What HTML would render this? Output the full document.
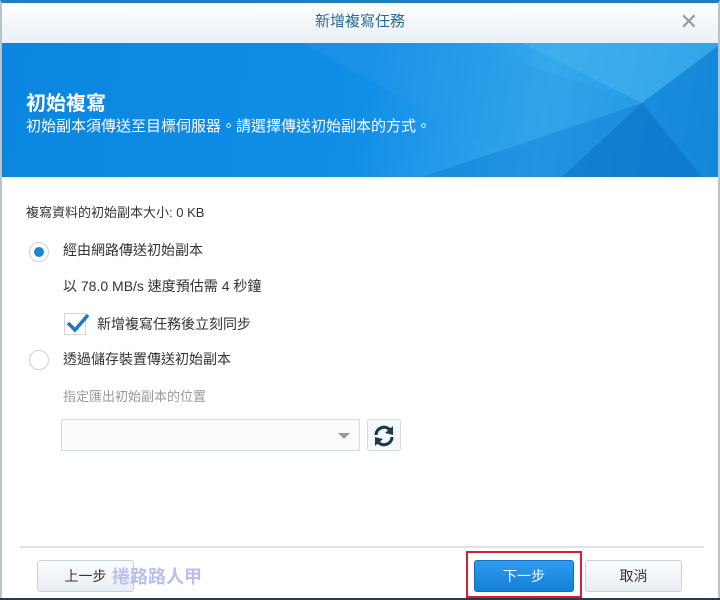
<!DOCTYPE html>
<html><head><meta charset="utf-8"><style>
*{margin:0;padding:0;box-sizing:border-box}
body{width:720px;height:600px;overflow:hidden;background:#2a3a48;font-family:"Liberation Sans","Noto Sans CJK TC",sans-serif;position:relative}
.win{position:absolute;left:0;top:0;width:720px;height:598px;background:#fff;border-top:3px solid #1b7fc0;border-left:2px solid #b8c4cc;border-right:2px solid #b8c4cc}
.title{position:absolute;left:0;right:0;top:0;height:40px;background:linear-gradient(#fdfeff,#eaf0f5);text-align:center;line-height:38px;color:#2a6a9a;font-size:15px}
.x{position:absolute;right:20px;top:0;color:#999;font-size:22px;line-height:38px}
.banner{position:absolute;left:0;right:0;top:40px;height:134px;background:linear-gradient(100deg,#0a86e0 0%,#118ee6 50%,#36a8ec 75%,#1890e0 100%);overflow:hidden}
.banner h1{position:absolute;left:24px;top:44px;color:#fff;font-size:20px;font-weight:bold}
.banner p{position:absolute;left:24px;top:72px;color:#fff;font-size:15px}
.t{position:absolute;font-size:14px;color:#333}
.radio{position:absolute;width:20px;height:20px;border-radius:50%;border:1px solid #c9d2d8;background:#fff}
.radio.on::after{content:"";position:absolute;left:4px;top:4px;width:10px;height:10px;border-radius:50%;background:#1a85d8}
.btn{position:absolute;top:557px;height:32px;border:1px solid #c8d2da;border-radius:3px;background:linear-gradient(#fbfcfd,#e9eef2);font-size:14px;color:#333;text-align:center;line-height:30px}
</style></head><body>
<div class="win">
<div class="title">新增複寫任務<span class="x">✕</span></div>
<div class="banner">
<svg width="720" height="134" style="position:absolute;left:0;top:0">
<polygon points="420,134 640,60 720,0 720,134" fill="#0d7dd4" opacity=".5"/>
<polygon points="520,0 640,60 720,0" fill="#4ab6f0" opacity=".5"/>
<polygon points="640,60 700,134 560,134" fill="#0a6cc2" opacity=".5"/>
<polygon points="300,0 460,0 640,60 500,110" fill="#2a9ce8" opacity=".35"/>
</svg>
<h1>初始複寫</h1>
<p>初始副本須傳送至目標伺服器。請選擇傳送初始副本的方式。</p>
</div>
<div class="t" style="left:24px;top:199px;font-size:13px">複寫資料的初始副本大小: 0 KB</div>
<div class="radio on" style="left:27px;top:239px"></div>
<div class="t" style="left:61px;top:237px">經由網路傳送初始副本</div>
<div class="t" style="left:61px;top:273px">以 78.0 MB/s 速度預估需 4 秒鐘</div>
<div style="position:absolute;left:62px;top:310px;width:22px;height:22px;border:1px solid #d0d8de;background:#fff"></div>
<svg style="position:absolute;left:63px;top:308px" width="26" height="22"><path d="M3 12 L10 19 L23 4" stroke="#1f78c8" stroke-width="3.5" fill="none"/></svg>
<div class="t" style="left:95px;top:311px">新增複寫任務後立刻同步</div>
<div class="radio" style="left:27px;top:347px"></div>
<div class="t" style="left:61px;top:346px">透過儲存裝置傳送初始副本</div>
<div class="t" style="left:61px;top:383px;color:#999;font-size:13px">指定匯出初始副本的位置</div>
<div style="position:absolute;left:59px;top:416px;width:299px;height:32px;border:1px solid #d4dbe0;background:#fafbfc"></div>
<div style="position:absolute;left:336px;top:430px;border-left:6px solid transparent;border-right:6px solid transparent;border-top:6px solid #999"></div>
<div style="position:absolute;left:365px;top:416px;width:34px;height:32px;border:1px solid #d4dbe0;border-radius:3px;background:#f6f8f9"></div>
<svg style="position:absolute;left:370px;top:421px" width="24" height="24" viewBox="0 0 24 24"><path d="M4 11 A8 8 0 0 1 18 6" stroke="#1a3a52" stroke-width="3.2" fill="none"/><polygon points="21,2 21,11 13,9" fill="#1a3a52"/><path d="M20 13 A8 8 0 0 1 6 18" stroke="#1a3a52" stroke-width="3.2" fill="none"/><polygon points="3,22 3,13 11,15" fill="#1a3a52"/></svg>
<div style="position:absolute;left:18px;top:543px;width:684px;height:2px;background:#dde2e6"></div>
<div class="btn" style="left:35px;width:97px">上一步</div>
<div style="position:absolute;left:110px;top:560px;font-size:18px;color:#b8c0ee;font-weight:bold">捲路路人甲</div>
<div style="position:absolute;left:464px;top:548px;width:116px;height:47px;border:2px solid #d42030"></div>
<div class="btn" style="left:472px;width:100px;background:linear-gradient(#2e9cf0,#137fd8);border-color:#1270c0;color:#fff">下一步</div>
<div class="btn" style="left:583px;width:97px">取消</div>
</div>
</body></html>
